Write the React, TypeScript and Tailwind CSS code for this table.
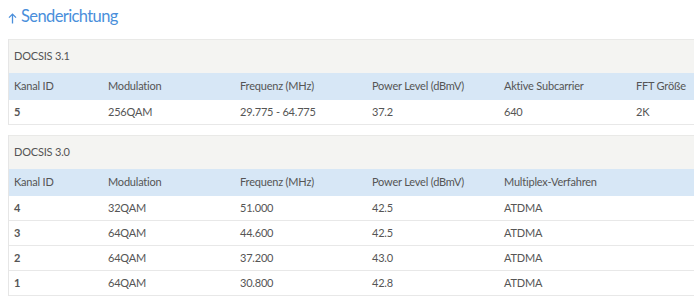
const COLS = "grid grid-cols-[94px_132px_132px_132px_132px_132px]";

type Table = {
  title: string;
  headers: string[];
  rows: string[][];
};

const TABLES: Table[] = [
  {
    title: "DOCSIS 3.1",
    headers: ["Kanal ID", "Modulation", "Frequenz (MHz)", "Power Level (dBmV)", "Aktive Subcarrier", "FFT Größe"],
    rows: [["5", "256QAM", "29.775 - 64.775", "37.2", "640", "2K"]],
  },
  {
    title: "DOCSIS 3.0",
    headers: ["Kanal ID", "Modulation", "Frequenz (MHz)", "Power Level (dBmV)", "Multiplex-Verfahren", ""],
    rows: [
      ["4", "32QAM", "51.000", "42.5", "ATDMA", ""],
      ["3", "64QAM", "44.600", "42.5", "ATDMA", ""],
      ["2", "64QAM", "37.200", "43.0", "ATDMA", ""],
      ["1", "64QAM", "30.800", "42.8", "ATDMA", ""],
    ],
  },
];

function ChannelTable({ t }: { t: Table }) {
  return (
    <div className="ml-[8px] w-[754px] border-l border-[#e6e6e6]">
      <div className="h-[34px] flex items-center px-[5px] bg-[#f4f4f2] border-t border-[#e9e9e7]">
        {t.title}
      </div>
      <div className={`${COLS} h-[27px] items-center bg-[#d7e7f6]`}>
        {t.headers.map((h, i) => (
          <div key={i} className="px-[5px] whitespace-nowrap">
            {h}
          </div>
        ))}
      </div>
      {t.rows.map((r, ri) => (
        <div key={ri} className={`${COLS} h-[25px] items-center border-b border-[#e8e8e8] bg-white`}>
          {r.map((c, i) => (
            <div key={i} className={`px-[5px] whitespace-nowrap ${i === 0 ? "font-bold" : ""}`}>
              {c}
            </div>
          ))}
        </div>
      ))}
    </div>
  );
}

export default function App() {
  return (
    <div
      className="w-[694px] h-[300px] overflow-hidden bg-white text-[#555] text-[11px] tracking-[-0.2px]"
      style={{ fontFamily: "Lato, 'Open Sans', sans-serif" }}
    >
      <h2 className="h-[33px] pl-[8px] flex items-center gap-[4px] text-[16.5px] tracking-[-0.6px] text-[#4a8fdb] leading-none">
        <svg width="9" height="11" viewBox="0 0 9 11" fill="none" stroke="#4a8fdb" strokeWidth="1.3" className="mt-[4px]">
          <path d="M4.5 10.5V1.2M1 4.6L4.5 1.1L8 4.6" />
        </svg>
        <span>Senderichtung</span>
      </h2>
      <div className="mt-[6px]">
        <ChannelTable t={TABLES[0]} />
      </div>
      <div className="mt-[10px]">
        <ChannelTable t={TABLES[1]} />
      </div>
    </div>
  );
}
